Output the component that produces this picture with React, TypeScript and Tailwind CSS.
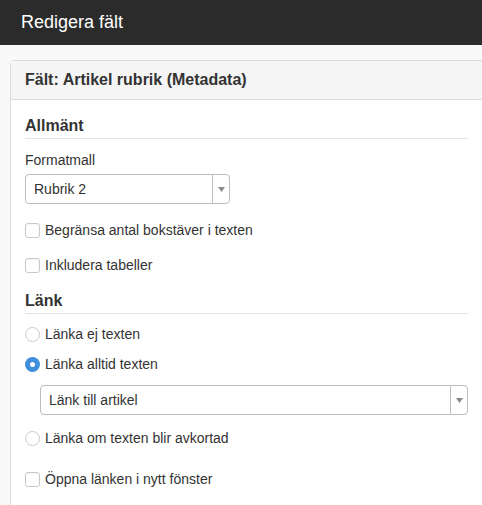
import React from 'react';

const font = { fontFamily: '"Liberation Sans", Arial, sans-serif' };

const Checkbox: React.FC<{ label: string; className?: string }> = ({ label, className = '' }) => (
  <label className={`flex items-center h-[20px] text-[14px] text-[#333] ${className}`}>
    <span className="w-[15px] h-[15px] rounded-[3px] border border-[#c8c8c8] bg-white shadow-[inset_0_1px_1px_rgba(0,0,0,0.04)]" />
    <span className="ml-[5px]">{label}</span>
  </label>
);

const Radio: React.FC<{ label: string; checked?: boolean; className?: string }> = ({
  label,
  checked,
  className = ''
}) => (
  <label className={`flex items-center h-[20px] text-[14px] text-[#333] ${className}`}>
    {checked ? (
      <span className="w-[15px] h-[15px] rounded-full bg-[#3f8fdc] flex items-center justify-center">
        <span className="w-[5px] h-[5px] rounded-full bg-white" />
      </span>
    ) : (
      <span className="w-[15px] h-[15px] rounded-full border border-[#c8c8c8] bg-white" />
    )}
    <span className="ml-[5px]">{label}</span>
  </label>
);

const Select: React.FC<{ value: string; className?: string }> = ({ value, className = '' }) => (
  <div
    className={`flex h-[30px] rounded-[4px] border border-[#bdbdbd] bg-white text-[14px] text-[#333] ${className}`}
  >
    <div className="flex-1 flex items-center pl-[8px]">{value}</div>
    <div className="w-[17px] border-l border-[#bdbdbd] flex items-center justify-center">
      <svg width="7" height="5" viewBox="0 0 7 5">
        <path d="M0 0 L7 0 L3.5 5 Z" fill="#8a8a8a" />
      </svg>
    </div>
  </div>
);

const SectionTitle: React.FC<{ title: string; className?: string }> = ({ title, className = '' }) => (
  <h2
    className={`text-[16px] leading-[20px] font-bold text-[#333] pb-[2px] border-b border-[#e5e5e5] ${className}`}
  >
    {title}
  </h2>
);

export default function App() {
  return (
    <div className="w-[482px] h-[505px] overflow-hidden bg-[#f9f9f9]" style={font}>
      <div className="h-[45px] bg-[#2b2b2b] flex items-center pl-[21px] text-white text-[18px]">
        Redigera fält
      </div>
      <div className="pt-[15px] pl-[10px]">
        <div className="w-[490px] h-[460px] bg-white border border-[#dcdcdc] rounded-tl-[4px]">
          <div className="h-[39px] bg-[#f5f5f5] border-b border-[#dcdcdc] flex items-center pl-[14px] text-[16px] font-bold text-[#333]">
            Fält: Artikel rubrik (Metadata)
          </div>
          <div className="pl-[14px] w-[457px]">
            <SectionTitle title="Allmänt" className="mt-[16px]" />
            <div className="mt-[11px] text-[14px] leading-[20px] text-[#333]">Formatmall</div>
            <Select value="Rubrik 2" className="mt-[4px] w-[205px]" />
            <Checkbox label="Begränsa antal bokstäver i texten" className="mt-[16px]" />
            <Checkbox label="Inkludera tabeller" className="mt-[15px]" />

            <SectionTitle title="Länk" className="mt-[16px]" />
            <Radio label="Länka ej texten" className="mt-[10px]" />
            <Radio label="Länka alltid texten" checked className="mt-[10px]" />
            <Select value="Länk till artikel" className="mt-[11px] ml-[15px]" />
            <Radio label="Länka om texten blir avkortad" className="mt-[13px]" />
            <Checkbox label="Öppna länken i nytt fönster" className="mt-[21px]" />
          </div>
        </div>
      </div>
    </div>
  );
}
